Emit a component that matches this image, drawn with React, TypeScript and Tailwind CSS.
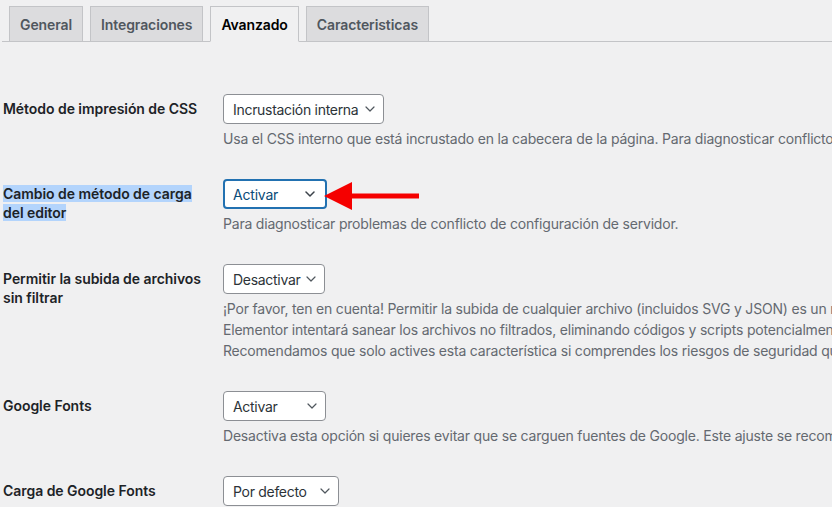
import React from "react";

const font = { fontFamily: "Inter, 'Noto Sans', sans-serif" };

function Chevron({ dark }: { dark?: boolean }) {
  return (
    <svg width="10" height="6" viewBox="0 0 10 6" className="shrink-0">
      <polyline
        points="1,1 5,5 9,1"
        fill="none"
        stroke={dark ? "#3c434a" : "#50575e"}
        strokeWidth={dark ? 1.5 : 1.2}
        strokeLinecap="round"
        strokeLinejoin="round"
      />
    </svg>
  );
}

function FakeSelect({ value, width, focused }: { value: string; width: string; focused?: boolean }) {
  return (
    <div
      className={
        focused
          ? `${width} h-[30px] flex items-center justify-between pl-[8px] pr-[10px] rounded-[4px] border-2 border-[#2271b1] bg-white text-[14px] tracking-[-0.2px] text-[#0a4b78]`
          : `${width} h-[30px] flex items-center justify-between pl-[9px] pr-[8px] rounded-[4px] border border-[#8c8f94] bg-white text-[14px] tracking-[-0.3px] text-[#2c3338]`
      }
    >
      <span className="whitespace-nowrap">{value}</span>
      <Chevron dark={focused} />
    </div>
  );
}

type Row = {
  label: React.ReactNode;
  value: string;
  width: string;
  focused?: boolean;
  desc?: string[];
};

const rows: Row[] = [
  {
    label: "Método de impresión de CSS",
    value: "Incrustación interna",
    width: "w-[161px]",
    desc: [
      "Usa el CSS interno que está incrustado en la cabecera de la página. Para diagnosticar conflictos de CSS, utiliza el archivo externo.",
    ],
  },
  {
    label: (
      <span className="bg-[#b3d4fc] [box-decoration-break:clone]">
        Cambio de método de carga del editor
      </span>
    ),
    value: "Activar",
    width: "w-[104px]",
    focused: true,
    desc: ["Para diagnosticar problemas de conflicto de configuración de servidor."],
  },
  {
    label: "Permitir la subida de archivos sin filtrar",
    value: "Desactivar",
    width: "w-[102px]",
    desc: [
      "¡Por favor, ten en cuenta! Permitir la subida de cualquier archivo (incluidos SVG y JSON) es un riesgo potencial de seguridad.",
      "Elementor intentará sanear los archivos no filtrados, eliminando códigos y scripts potencialmente peligrosos.",
      "Recomendamos que solo actives esta característica si comprendes los riesgos de seguridad que conlleva.",
    ],
  },
  {
    label: "Google Fonts",
    value: "Activar",
    width: "w-[103px]",
    desc: [
      "Desactiva esta opción si quieres evitar que se carguen fuentes de Google. Este ajuste se recomienda cuando cargas fuentes desde otra fuente.",
    ],
  },
  {
    label: "Carga de Google Fonts",
    value: "Por defecto",
    width: "w-[116px]",
    desc: ["Establece el método de carga de Google Fonts."],
  },
];

const tabs = ["General", "Integraciones", "Avanzado", "Caracteristicas"];

export default function App() {
  return (
    <div className="w-[832px] h-[507px] overflow-hidden bg-[#f0f0f1]" style={font}>
      {/* Tabs */}
      <div className="ml-[2px] pt-[6px] flex items-end border-b border-[#c3c4c7]">
        {tabs.map((t) => (
          <div
            key={t}
            className={
              t === "Avanzado"
                ? "ml-[7px] -mb-px h-[36px] px-[10px] flex items-center border border-[#c3c4c7] border-b-[#f0f0f1] bg-[#f0f0f1] text-[14px] font-semibold tracking-[-0.1px] text-black"
                : "ml-[7px] h-[35px] px-[10px] flex items-center border border-b-0 border-[#c3c4c7] bg-[#dcdcde] text-[14px] font-semibold tracking-[-0.1px] text-[#50575e]"
            }
          >
            {t}
          </div>
        ))}
      </div>

      {/* Settings table */}
      <div className="ml-[3px] mt-[37px] flex flex-col">
        {rows.map((r, i) => (
          <div key={i} className="flex">
            <div className="w-[210px] shrink-0 pt-[20px] pr-[10px] text-[14px] font-semibold leading-[19px] tracking-[-0.05px] text-[#1d2327]">
              {r.label}
            </div>
            <div className="pl-[10px] py-[15px] flex flex-col">
              <div className="relative">
                <FakeSelect value={r.value} width={r.width} focused={r.focused} />
                {r.focused && (
                  <svg
                    className="absolute left-[101px] top-[3px]"
                    width="96"
                    height="28"
                    viewBox="0 0 96 28"
                  >
                    <polygon points="0,14 28,0 28,28" fill="#f50000" />
                    <rect x="26" y="11.5" width="69" height="5" fill="#f50000" />
                  </svg>
                )}
              </div>
              <div className="mt-[4px] flex flex-col">
                {r.desc?.map((d, j) => (
                  <p key={j} className="whitespace-nowrap text-[14px] leading-[21px] tracking-[-0.2px] text-[#646970]">
                    {d}
                  </p>
                ))}
              </div>
            </div>
          </div>
        ))}
      </div>
    </div>
  );
}
